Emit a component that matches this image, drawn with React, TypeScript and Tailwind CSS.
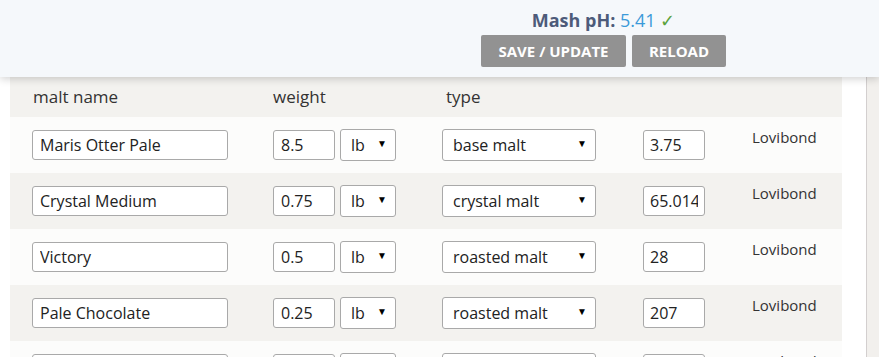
import React from 'react';

type Malt = {
  name: string;
  weight: string;
  type: string;
  color: string;
};

const malts: Malt[] = [
  { name: 'Maris Otter Pale', weight: '8.5', type: 'base malt', color: '3.75' },
  { name: 'Crystal Medium', weight: '0.75', type: 'crystal malt', color: '65.014' },
  { name: 'Victory', weight: '0.5', type: 'roasted malt', color: '28' },
  { name: 'Pale Chocolate', weight: '0.25', type: 'roasted malt', color: '207' },
  { name: 'Black Patent', weight: '0.1', type: 'roasted malt', color: '500' },
];

const Select: React.FC<{ value: string; options: string[]; width: string }> = ({ value, options, width }) => (
  <div className={`relative h-[32px] ${width}`}>
    <select
      defaultValue={value}
      className="h-full w-full appearance-none rounded-[3px] border border-[#a9a9a9] bg-white pl-[10px] text-[16px] text-[#222] outline-none"
    >
      {options.map((o) => (
        <option key={o}>{o}</option>
      ))}
    </select>
    <span className="pointer-events-none absolute right-[9px] top-[9px] text-[10px] leading-none text-black">▼</span>
  </div>
);

const MaltRow: React.FC<{ malt: Malt; odd: boolean }> = ({ malt, odd }) => (
  <div className={`flex h-[56px] items-center pl-[22px] ${odd ? 'bg-[#f3f2ef]' : 'bg-[#fcfcfb]'}`}>
    <input
      defaultValue={malt.name}
      className="h-[30px] w-[196px] rounded-[3px] border border-[#a9a9a9] bg-white px-[7px] text-[16px] text-[#222] outline-none"
    />
    <input
      defaultValue={malt.weight}
      className="ml-[45px] h-[30px] w-[62px] rounded-[3px] border border-[#a9a9a9] bg-white px-[7px] text-[16px] text-[#222] outline-none"
    />
    <div className="ml-[5px]">
      <Select value="lb" options={['lb', 'oz', 'kg', 'g']} width="w-[56px]" />
    </div>
    <div className="ml-[46px]">
      <Select
        value={malt.type}
        options={['base malt', 'crystal malt', 'roasted malt', 'adjunct']}
        width="w-[154px]"
      />
    </div>
    <input
      defaultValue={malt.color}
      className="ml-[47px] h-[30px] w-[62px] rounded-[3px] border border-[#a9a9a9] bg-white px-[6px] text-[16px] text-[#222] outline-none"
    />
    <span className="ml-[47px] self-start pt-[10px] text-[15px] leading-[20px] text-[#333]">Lovibond</span>
  </div>
);

export default function App() {
  return (
    <div className="relative h-[357px] w-[879px] overflow-hidden bg-white font-['Open_Sans',sans-serif]">
      <header className="relative z-10 flex h-[77px] flex-col items-center bg-[#f5f8fb] pl-[328px] pt-[7px] shadow-[0_2px_8px_rgba(0,0,0,0.18)]">
        <div className="text-[18px] leading-[26px]">
          <span className="font-bold text-[#4d5b7a]">Mash pH:</span>{' '}
          <span className="text-[#3b9ad9]">5.41</span>{' '}
          <span className="text-[#5aa23c]">✓</span>
        </div>
        <div className="mt-[2px] flex gap-[6px]">
          <button className="h-[32px] w-[145px] rounded-[2px] bg-[#929292] text-[15px] font-bold text-white">
            SAVE / UPDATE
          </button>
          <button className="h-[32px] w-[94px] rounded-[2px] bg-[#929292] text-[15px] font-bold text-white">
            RELOAD
          </button>
        </div>
      </header>

      <div className="flex h-[280px]">
        <div className="w-[10px]" />
        <div className="w-[832px]">
          <div className="flex h-[40px] items-center bg-[#f3f2ef] pl-[23px] text-[17px] text-[#333]">
            <span className="w-[240px]">malt name</span>
            <span className="w-[173px]">weight</span>
            <span>type</span>
          </div>
          {malts.map((m, i) => (
            <MaltRow key={m.name} malt={m} odd={i % 2 === 1} />
          ))}
        </div>
        <div className="w-[24px]" />
        <div className="flex-1 border-l border-[#d3cfcf] bg-[#f2f0ed]" />
      </div>
    </div>
  );
}
